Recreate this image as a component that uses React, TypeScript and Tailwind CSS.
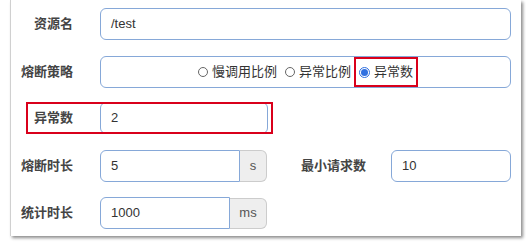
import React from "react";

const font = { fontFamily: '"Liberation Sans", "Noto Sans CJK SC", sans-serif' };

function Label({ children, className = "" }: { children: React.ReactNode; className?: string }) {
  return (
    <div className={"w-[89px] shrink-0 pr-[27px] text-right text-[13px] font-bold text-[#444] " + className}>
      {children}
    </div>
  );
}

function Radio({ label, checked }: { label: string; checked?: boolean }) {
  return (
    <span className="flex items-center gap-[4px]">
      {checked ? (
        <span className="flex h-[11px] w-[11px] items-center justify-center rounded-full border border-[#2f6fe0] bg-white">
          <span className="h-[7px] w-[7px] rounded-full bg-[#2f6fe0]" />
        </span>
      ) : (
        <span className="h-[10px] w-[10px] rounded-full border border-[#666] bg-white" />
      )}
      <span>{label}</span>
    </span>
  );
}

export default function App() {
  const input = "h-[32px] rounded-[6px] border border-[#86a8d8] bg-white px-[10px] flex items-center text-[13px] text-[#333]";
  return (
    <div className="h-[245px] w-[526px] bg-white" style={font}>
      <div className="ml-[10px] flex h-[236px] w-[511px] flex-col border-l border-[#d0d0d0] bg-white pt-[8px] shadow-[2px_2px_3px_rgba(0,0,0,0.45)]">
        <div className="flex items-center">
          <Label>资源名</Label>
          <div className={input + " w-[411px]"}>/test</div>
        </div>

        <div className="mt-[16px] flex items-center">
          <Label>熔断策略</Label>
          <div className={input + " w-[411px] justify-center gap-[8px]"}>
            <Radio label="慢调用比例" />
            <Radio label="异常比例" />
            <span className="relative">
              <Radio label="异常数" checked />
              <span className="absolute -bottom-[5px] -left-[5px] -right-[5px] -top-[5px] border-2 border-[#d9001b]" />
            </span>
          </div>
        </div>

        <div className="relative mt-[14px] flex items-center">
          <Label>异常数</Label>
          <div className={input + " w-[168px]"}>2</div>
          <span className="absolute left-[15px] top-0 h-[32px] w-[247px] border-2 border-[#d9001b]" />
        </div>

        <div className="mt-[16px] flex items-center">
          <Label>熔断时长</Label>
          <div className={input + " w-[140px] rounded-r-none"}>5</div>
          <div className="flex h-[32px] w-[27px] items-center justify-center rounded-r-[6px] border border-l-0 border-[#ccc] bg-[#eee] text-[13px] text-[#555]">
            s
          </div>
          <div className="ml-[34px] w-[90px] shrink-0 text-[13px] font-bold text-[#444]">最小请求数</div>
          <div className={input + " w-[120px]"}>10</div>
        </div>

        <div className="mt-[15px] flex items-center">
          <Label>统计时长</Label>
          <div className={input + " h-[31px] w-[130px] rounded-r-none"}>1000</div>
          <div className="flex h-[31px] w-[37px] items-center justify-center rounded-r-[6px] border border-l-0 border-[#ccc] bg-[#eee] text-[13px] text-[#555]">
            ms
          </div>
        </div>
      </div>
    </div>
  );
}
